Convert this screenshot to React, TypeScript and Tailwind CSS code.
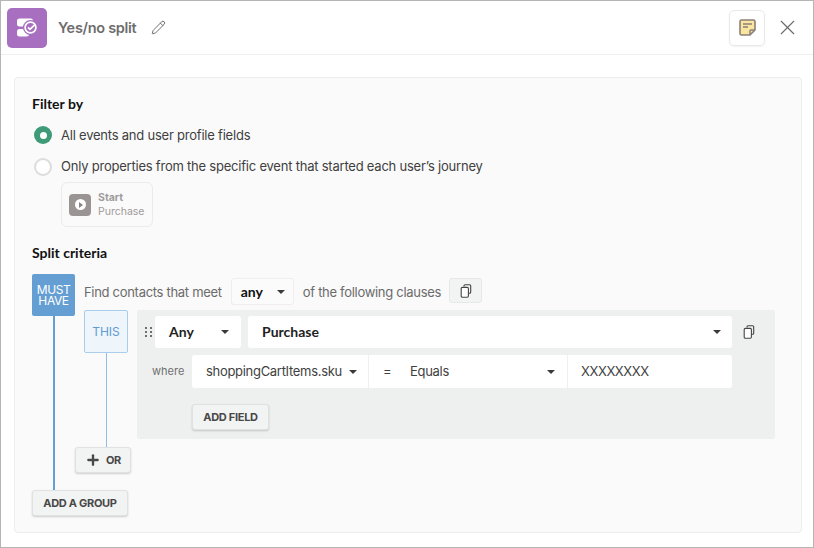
import { Pencil, Plus, X } from 'lucide-react';

function Caret() {
  return <span className="w-0 h-0 border-x-[4px] border-x-transparent border-t-[4px] border-t-[#3a3a3a]" />;
}

function CopyIcon() {
  return (
    <svg width="12" height="14" viewBox="0 0 12 14" fill="none" stroke="#444" strokeWidth="1.1" strokeLinejoin="round">
      <path d="M4 2.5V1.8a1 1 0 0 1 1-1h4.7a1 1 0 0 1 1 1v6.4a1 1 0 0 1-1 1H9" />
      <rect x="1.2" y="3.4" width="7.2" height="9.8" rx="1.2" fill="#fff" />
    </svg>
  );
}

function GrayButton({ children, className }: { children: React.ReactNode; className: string }) {
  return (
    <button className={`flex items-center justify-center bg-[#f2f3f3] border border-[#e0e1e1] rounded-[3px] shadow-[0_1px_2px_rgba(0,0,0,0.18)] text-[11px] tracking-[-0.3px] font-bold text-[#484848] ${className}`}>
      {children}
    </button>
  );
}

export default function App() {
  return (
    <div className="w-[814px] h-[548px] bg-white border border-[#b5b5b5] font-['Inter',sans-serif] text-[#3f3f3f] overflow-hidden">
      {/* Header */}
      <div className="h-[54px] border-b border-[#eeeeee] flex items-center pl-[6px] pr-[13px]">
        <div className="w-10 h-10 rounded-[5px] bg-[#a86fc0] flex items-center justify-center">
          <svg width="20" height="19" viewBox="0 0 20 19">
            <rect x="0" y="0.5" width="16" height="8" rx="2.5" fill="#fff" />
            <rect x="0" y="11" width="12" height="7.5" rx="2.5" fill="#fff" />
            <circle cx="13.5" cy="9.5" r="7.6" fill="#a86fc0" />
            <circle cx="13.5" cy="9.5" r="5.4" fill="none" stroke="#fff" strokeWidth="1.7" />
            <path d="M11 9.3l2 2 4.6-4.4" fill="none" stroke="#fff" strokeWidth="1.7" />
          </svg>
        </div>
        <span className="ml-[11px] text-[14.5px] tracking-[-0.3px] font-semibold text-[#6d6d6d]">Yes/no split</span>
        <Pencil className="ml-[15px] w-[15px] h-[15px] text-[#666]" strokeWidth={1.5} />
        <div className="ml-auto w-9 h-9 rounded-[5px] border border-[#e8e8e8] shadow-[0_1px_2px_rgba(0,0,0,0.05)] flex items-center justify-center">
          <svg width="17" height="17" viewBox="0 0 17 17">
            <path d="M2.5 1h12a1.5 1.5 0 0 1 1.5 1.5V11l-5 5H2.5A1.5 1.5 0 0 1 1 14.5v-12A1.5 1.5 0 0 1 2.5 1z" fill="#f8e6a0" stroke="#8a8078" strokeWidth="1.6" strokeLinejoin="round" />
            <path d="M4 5h9M4 8h5" stroke="#8a8078" strokeWidth="1.5" />
            <path d="M11 16v-4a1 1 0 0 1 1-1h4" fill="none" stroke="#8a8078" strokeWidth="1.5" />
          </svg>
        </div>
        <X className="ml-[10px] w-[25px] h-[25px] text-[#6a6a6a]" strokeWidth={1.1} />
      </div>

      {/* Panel */}
      <div className="mt-[22px] ml-[13px] w-[788px] h-[456px] bg-[#fafafa] border border-[#ededed] rounded-[4px] pl-[17px] pt-[18px]">
        <h2 className="font-['Lato',sans-serif] text-[14px] font-bold text-[#111] leading-4">Filter by</h2>

        <div className="mt-[14px] flex items-center h-[18px] text-[13px] tracking-[-0.22px]">
          <span className="ml-[2px] w-[18px] h-[18px] rounded-full bg-[#3f9a78] flex items-center justify-center">
            <span className="w-[7px] h-[7px] rounded-full bg-white" />
          </span>
          <span className="ml-[9px] pt-[2px]">All events and user profile fields</span>
        </div>
        <div className="mt-[14px] flex items-center h-[18px] text-[13px] tracking-[-0.22px]">
          <span className="ml-[2px] w-[18px] h-[18px] rounded-full bg-white border-2 border-[#dcdcdc]" />
          <span className="ml-[9px]">Only properties from the specific event that started each user’s journey</span>
        </div>
        <div className="mt-[6px] ml-[29px] w-[92px] h-[45px] border border-[#ebebeb] rounded-[6px] flex items-center pl-[7px]">
          <div className="w-[22px] h-[22px] rounded-[4px] bg-[#9b9494] flex items-center justify-center">
            <span className="w-[11px] h-[11px] rounded-full bg-white flex items-center justify-center">
              <span className="w-0 h-0 ml-[1px] border-y-[3px] border-y-transparent border-l-[4px] border-l-[#8a8484]" />
            </span>
          </div>
          <div className="ml-[7px] text-[10.5px] leading-[14px] text-[#a09b9b]">
            <div className="font-bold">Start</div>
            <div>Purchase</div>
          </div>
        </div>

        <h2 className="mt-[18px] font-['Lato',sans-serif] text-[14px] font-bold text-[#111] leading-4">Split criteria</h2>

        {/* Criteria tree */}
        <div className="mt-[13px] flex">
          <div className="w-[43px] flex flex-col items-center">
            <div className="w-[43px] h-[42px] rounded-[2px] bg-[#659ed3] text-white text-[12px] tracking-[-0.4px] leading-[11px] flex items-center justify-center text-center">
              MUST HAVE
            </div>
            <div className="ml-px w-[2px] flex-1 bg-[#659ed3]" />
          </div>
          <div className="flex flex-col">
            <div className="h-[36px] pl-[9px] flex items-start text-[13px] tracking-[-0.3px] text-[#6b6b6b]">
              <span className="mt-[10px] leading-4">Find contacts that meet</span>
              <div className="ml-[9px] mt-[4px] w-[63px] h-[27px] bg-[#fbfbfb] border border-[#eeeeee] rounded-[3px] flex items-center pl-[9px] pr-[8px] justify-between">
                <span className="font-['Lato',sans-serif] text-[14px] tracking-normal font-bold text-[#111]">any</span>
                <Caret />
              </div>
              <span className="ml-[9px] mt-[10px] leading-4">of the following clauses</span>
              <div className="ml-[8px] mt-[4px] w-[33px] h-[25px] bg-[#f2f3f3] border border-[#e8e8e8] rounded-[3px] flex items-center justify-center">
                <CopyIcon />
              </div>
            </div>
            <div className="pl-[9px] flex">
              <div className="w-[44px] mr-[9px] flex flex-col items-center">
                <div className="w-[44px] h-[43px] bg-[#eef5fb] border border-[#a9cdeb] rounded-[2px] text-[#5e9bd1] text-[12px] flex items-center justify-center">
                  THIS
                </div>
                <div className="w-px flex-1 bg-[#8fbde6]" />
              </div>
              <div className="w-[638px] h-[129px] bg-[#eef0f0] rounded-[2px] pt-[6px] pb-[8px] mb-2 pl-[7px]">
                <div className="flex items-center">
                  <svg width="11" height="12" viewBox="0 0 11 12" fill="#444">
                    <circle cx="2" cy="2" r="1" /><circle cx="7" cy="2" r="1" />
                    <circle cx="2" cy="6" r="1" /><circle cx="7" cy="6" r="1" />
                    <circle cx="2" cy="10" r="1" /><circle cx="7" cy="10" r="1" />
                  </svg>
                  <div className="w-[86px] h-[32px] bg-white rounded-[3px] flex items-center justify-between pl-[14px] pr-[12px]">
                    <span className="pb-[2px] font-['Lato',sans-serif] text-[14px] font-bold text-[#222]">Any</span>
                    <Caret />
                  </div>
                  <div className="ml-[7px] w-[484px] h-[32px] bg-white rounded-[3px] flex items-center justify-between pl-[14px] pr-[11px]">
                    <span className="pb-[2px] font-['Lato',sans-serif] text-[14px] font-bold text-[#222]">Purchase</span>
                    <Caret />
                  </div>
                  <span className="ml-[11px]"><CopyIcon /></span>
                </div>
                <div className="mt-[7px] flex items-center">
                  <span className="w-[48px] pl-[8px] text-[11px] text-[#6f6f6f]">where</span>
                  <div className="w-[176px] h-[33px] bg-white rounded-l-[3px] flex items-center justify-between pl-[14px] pr-[11px]">
                    <span className="text-[13px] tracking-[-0.3px]">shoppingCartItems.sku</span>
                    <Caret />
                  </div>
                  <div className="ml-px w-[198px] h-[33px] bg-white flex items-center pl-[14px] pr-[12px] text-[13px] tracking-[-0.3px]">
                    <span className="w-[27px]">=</span>
                    <span>Equals</span>
                    <span className="ml-auto flex"><Caret /></span>
                  </div>
                  <div className="ml-px w-[164px] h-[33px] bg-white rounded-r-[3px] flex items-center pl-[13px] text-[13px] tracking-[-0.4px]">
                    XXXXXXXX
                  </div>
                </div>
                <GrayButton className="mt-[16px] ml-[48px] w-[77px] h-[26px]">ADD FIELD</GrayButton>
              </div>
            </div>
            <GrayButton className="w-[56px] h-[26px] gap-[5px]">
              <Plus className="w-4 h-4" strokeWidth={3.5} />
              OR
            </GrayButton>
            <div className="h-[17px]" />
          </div>
        </div>
        <GrayButton className="w-[96px] h-[26px]">ADD A GROUP</GrayButton>
      </div>
    </div>
  );
}
